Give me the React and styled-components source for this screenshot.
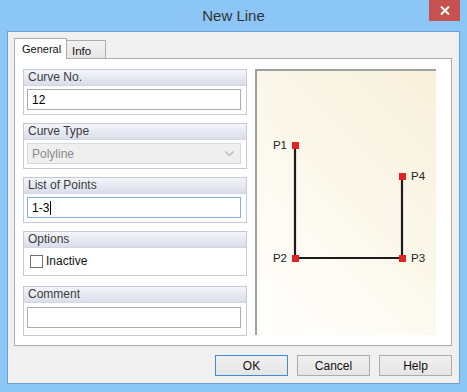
import React from "react";
import styled, { createGlobalStyle } from "styled-components";

const GlobalStyle = createGlobalStyle`
  html, body {
    margin: 0;
    padding: 0;
    overflow: hidden;
  }
  body {
    font-family: "Liberation Sans", Arial, sans-serif;
    font-size: 11px;
    color: #1e1e1e;
  }
`;

const points = [
  { id: "P1", x: 38, y: 74, side: "left" },
  { id: "P2", x: 38, y: 187, side: "left" },
  { id: "P3", x: 145, y: 187, side: "right" },
  { id: "P4", x: 145, y: 105, side: "right" },
];

const App = () => {
  return (
    <>
      <GlobalStyle />
      <Window>
        <TitleBar>
          <Title>New Line</Title>
          <CloseButton>
            <svg width="10" height="9" viewBox="0 0 10 9">
              <path d="M1 0.5L9 8.5M9 0.5L1 8.5" stroke="#fff" strokeWidth="2" />
            </svg>
          </CloseButton>
        </TitleBar>
        <Content>
          <Tabs>
            <Tab active>General</Tab>
            <Tab>Info</Tab>
          </Tabs>
          <Panel>
            <LeftColumn>
              <Group>
                <GroupHeader>Curve No.</GroupHeader>
                <GroupBody>
                  <TextBox>12</TextBox>
                </GroupBody>
              </Group>
              <Group>
                <GroupHeader>Curve Type</GroupHeader>
                <GroupBody>
                  <Select>
                    Polyline
                    <svg width="9" height="6" viewBox="0 0 9 6">
                      <path d="M0.5 0.5L4.5 4.5L8.5 0.5" fill="none" stroke="#b8b8b8" strokeWidth="1.3" />
                    </svg>
                  </Select>
                </GroupBody>
              </Group>
              <Group>
                <GroupHeader>List of Points</GroupHeader>
                <GroupBody>
                  <TextBox focused>
                    1-3<Caret />
                  </TextBox>
                </GroupBody>
              </Group>
              <Group>
                <GroupHeader>Options</GroupHeader>
                <OptionsBody>
                  <CheckBox />
                  <span>Inactive</span>
                </OptionsBody>
              </Group>
              <Group tall>
                <GroupHeader>Comment</GroupHeader>
                <GroupBody tall>
                  <TextBox />
                </GroupBody>
              </Group>
            </LeftColumn>
            <Preview>
              <svg width="179" height="264" viewBox="0 0 179 264">
                <polyline
                  points={points.map((p) => `${p.x},${p.y}`).join(" ")}
                  fill="none"
                  stroke="#1c1c1c"
                  strokeWidth="2.2"
                />
                {points.map((p) => (
                  <g key={p.id}>
                    <rect x={p.x - 3} y={p.y - 3} width="7" height="7" fill="#e2231f" />
                    <text
                      x={p.side === "left" ? p.x - 8 : p.x + 9}
                      y={p.y + 4}
                      textAnchor={p.side === "left" ? "end" : "start"}
                      fontFamily="Liberation Sans, Arial, sans-serif"
                      fontSize="11.5"
                      fill="#222"
                    >
                      {p.id}
                    </text>
                  </g>
                ))}
              </svg>
            </Preview>
          </Panel>
          <ButtonRow>
            <Button primary>OK</Button>
            <Button>Cancel</Button>
            <Button>Help</Button>
          </ButtonRow>
        </Content>
      </Window>
    </>
  );
};

const Window = styled.div`
  width: 467px;
  height: 392px;
  background: #8bc6f7;
  display: flex;
  flex-direction: column;
  box-sizing: border-box;
`;

const TitleBar = styled.div`
  height: 31px;
  position: relative;
  display: flex;
  align-items: center;
  justify-content: center;
`;

const Title = styled.div`
  font-size: 15px;
  color: #333;
  margin-top: -1px;
`;

const CloseButton = styled.div`
  position: absolute;
  top: 0;
  right: 7px;
  width: 31px;
  height: 21px;
  background: #c75050;
  display: flex;
  align-items: center;
  justify-content: center;
`;

const Content = styled.div`
  margin: 0 7px 8px 7px;
  flex: 1;
  background: #f0f0f0;
  border: 1px solid #6f9fcf;
  padding: 6px 7px 0 6px;
  display: flex;
  flex-direction: column;
`;

const Tabs = styled.div`
  display: flex;
  align-items: flex-end;
  height: 21px;
  margin-bottom: -1px;
  position: relative;
  z-index: 1;
`;

const Tab = styled.div`
  box-sizing: border-box;
  height: ${(p) => (p.active ? "21px" : "19px")};
  width: ${(p) => (p.active ? "53px" : "40px")};
  margin-left: ${(p) => (p.active ? "0" : "-1px")};
  padding: ${(p) => (p.active ? "0 0 0 7px" : "2px 0 0 5px")};
  border: 1px solid #acacac;
  border-bottom: ${(p) => (p.active ? "1px solid #fff" : "1px solid #acacac")};
  background: ${(p) => (p.active ? "#fff" : "linear-gradient(#f2f2f2, #e6e6e6)")};
  font-size: ${(p) => (p.active ? "11px" : "11.5px")};
  display: flex;
  align-items: center;
  white-space: nowrap;
  color: #111;
`;

const Panel = styled.div`
  height: 288px;
  box-sizing: border-box;
  background: #fff;
  border: 1px solid #acacac;
  padding: 10px 14px 0 8px;
  display: flex;
  gap: 8px;
`;

const LeftColumn = styled.div`
  width: 224px;
  display: flex;
  flex-direction: column;
  gap: 8px;
`;

const Group = styled.div`
  border: 1px solid #c6c9d6;
  display: flex;
  flex-direction: column;
  margin-top: ${(p) => (p.tall ? "2px" : "0")};
`;

const GroupHeader = styled.div`
  height: 15px;
  line-height: 15px;
  padding-left: 4px;
  font-size: 12px;
  color: #3b3b3b;
  background: linear-gradient(#f4f5fa, #dadeea);
  border-bottom: 1px solid #d3d6e0;
`;

const GroupBody = styled.div`
  padding: ${(p) => (p.tall ? "4px 5px 7px 3px" : "3px 5px 4px 3px")};
`;

const OptionsBody = styled.div`
  padding: 6px 5px 7px 6px;
  display: flex;
  align-items: center;
  gap: 3px;
  font-size: 12px;
  color: #111;
`;

const CheckBox = styled.div`
  width: 11px;
  height: 11px;
  border: 1px solid #707070;
  background: #fff;
`;

const TextBox = styled.div`
  box-sizing: border-box;
  height: 21px;
  border: 1px solid ${(p) => (p.focused ? "#7eb4ea" : "#acacac")};
  background: #fff;
  padding-left: 4px;
  display: flex;
  align-items: center;
  font-size: 12px;
  color: #000;
`;

const Caret = styled.span`
  display: inline-block;
  width: 1px;
  height: 14px;
  background: #000;
  margin-left: 1px;
`;

const Select = styled.div`
  box-sizing: border-box;
  height: 21px;
  border: 1px solid #d9d9d9;
  background: #efefef;
  padding: 0 6px 0 4px;
  display: flex;
  align-items: center;
  justify-content: space-between;
  font-size: 12px;
  color: #8a8a8a;
`;

const Preview = styled.div`
  width: 181px;
  height: 266px;
  box-sizing: border-box;
  border-top: 2px solid #a0a0a0;
  border-left: 2px solid #a0a0a0;
  background: linear-gradient(45deg, #ffffff 0%, #fbf8ec 50%, #f8f0dc 100%);
`;

const ButtonRow = styled.div`
  display: flex;
  justify-content: flex-end;
  gap: 9px;
  padding-top: 9px;
`;

const Button = styled.div`
  box-sizing: border-box;
  width: 73px;
  height: 21px;
  border: 1px solid ${(p) => (p.primary ? "#3d8ad6" : "#acacac")};
  background: linear-gradient(#f0f0f0, #e5e5e5);
  display: flex;
  align-items: center;
  justify-content: center;
  font-size: 12px;
  color: #111;
`;

export default App;
